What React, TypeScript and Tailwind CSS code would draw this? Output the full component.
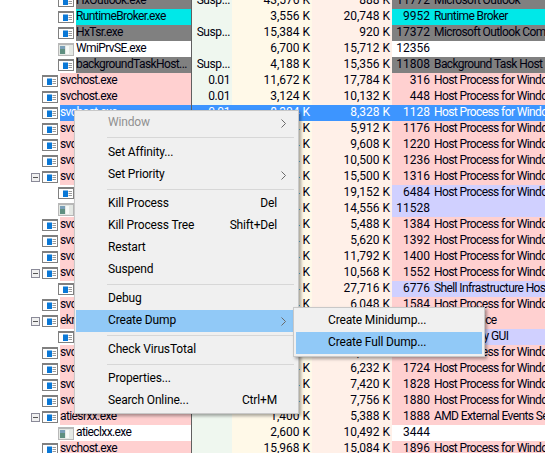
const FONT = "font-['Roboto',sans-serif]";

type Row = {
  depth: number;
  exp?: boolean;
  icon?: "app" | "img";
  name: string;
  bg: string;
  cpu?: string;
  priv: string;
  ws: string;
  pid: string;
  desc: string;
};

const PINK = "bg-[#ffd0d0]";
const GRAY = "bg-[#808080]";
const LAV = "bg-[#d0d0ff]";
const CYAN = "bg-[#00e8e8]";
const WHITE = "bg-white";
const HOST = "Host Process for Windows Services";

const rows: Row[] = [
  { depth: 2, name: "HxOutlook.exe", bg: GRAY, cpu: "Susp...", priv: "43,576 K", ws: "888 K", pid: "11772", desc: "Microsoft Outlook" },
  { depth: 2, name: "RuntimeBroker.exe", bg: CYAN, priv: "3,556 K", ws: "20,748 K", pid: "9952", desc: "Runtime Broker" },
  { depth: 2, name: "HxTsr.exe", bg: GRAY, cpu: "Susp...", priv: "15,384 K", ws: "920 K", pid: "17372", desc: "Microsoft Outlook Communications" },
  { depth: 2, icon: "img", name: "WmiPrvSE.exe", bg: WHITE, priv: "6,700 K", ws: "15,712 K", pid: "12356", desc: "" },
  { depth: 2, name: "backgroundTaskHost...", bg: GRAY, cpu: "Susp...", priv: "4,188 K", ws: "15,356 K", pid: "11808", desc: "Background Task Host" },
  { depth: 1, name: "svchost.exe", bg: PINK, cpu: "0.01", priv: "11,672 K", ws: "17,784 K", pid: "316", desc: HOST },
  { depth: 1, name: "svchost.exe", bg: PINK, cpu: "0.01", priv: "3,124 K", ws: "10,132 K", pid: "448", desc: HOST },
  { depth: 1, name: "svchost.exe", bg: "sel", cpu: "0.01", priv: "8,304 K", ws: "8,328 K", pid: "1128", desc: HOST },
  { depth: 1, name: "svchost.exe", bg: PINK, priv: "2,304 K", ws: "5,912 K", pid: "1176", desc: HOST },
  { depth: 1, name: "svchost.exe", bg: PINK, priv: "3,304 K", ws: "9,608 K", pid: "1220", desc: HOST },
  { depth: 1, name: "svchost.exe", bg: PINK, priv: "4,304 K", ws: "10,500 K", pid: "1236", desc: HOST },
  { depth: 1, exp: true, name: "svchost.exe", bg: PINK, priv: "5,304 K", ws: "15,500 K", pid: "1316", desc: HOST },
  { depth: 2, name: "sihost.exe", bg: LAV, priv: "4,304 K", ws: "19,152 K", pid: "6484", desc: HOST },
  { depth: 2, icon: "img", name: "WmiPrvSE.exe", bg: LAV, priv: "4,304 K", ws: "14,556 K", pid: "11528", desc: "" },
  { depth: 1, name: "svchost.exe", bg: PINK, priv: "1,304 K", ws: "5,488 K", pid: "1384", desc: HOST },
  { depth: 1, name: "svchost.exe", bg: PINK, priv: "1,304 K", ws: "5,620 K", pid: "1392", desc: HOST },
  { depth: 1, name: "svchost.exe", bg: PINK, priv: "2,304 K", ws: "11,792 K", pid: "1400", desc: HOST },
  { depth: 1, exp: true, name: "svchost.exe", bg: PINK, priv: "2,304 K", ws: "10,568 K", pid: "1552", desc: HOST },
  { depth: 2, name: "sihost.exe", bg: LAV, priv: "4,304 K", ws: "27,716 K", pid: "6776", desc: "Shell Infrastructure Host" },
  { depth: 1, name: "svchost.exe", bg: PINK, priv: "2,304 K", ws: "6,048 K", pid: "1584", desc: HOST },
  { depth: 1, exp: true, name: "ekrn.exe", bg: PINK, priv: "2,304 K", ws: "6,048 K", pid: "1600", desc: "ESET Service" },
  { depth: 2, name: "egui.exe", bg: LAV, priv: "2,304 K", ws: "6,048 K", pid: "1620", desc: "ESET Proxy GUI" },
  { depth: 1, name: "svchost.exe", bg: PINK, priv: "2,304 K", ws: "6,048 K", pid: "1640", desc: HOST },
  { depth: 1, name: "svchost.exe", bg: PINK, priv: "2,304 K", ws: "6,232 K", pid: "1724", desc: HOST },
  { depth: 1, name: "svchost.exe", bg: PINK, priv: "2,304 K", ws: "7,420 K", pid: "1828", desc: HOST },
  { depth: 1, name: "svchost.exe", bg: PINK, priv: "2,304 K", ws: "7,756 K", pid: "1880", desc: HOST },
  { depth: 1, exp: true, name: "atiesrxx.exe", bg: PINK, priv: "1,400 K", ws: "5,388 K", pid: "1888", desc: "AMD External Events Service" },
  { depth: 2, icon: "img", name: "atieclxx.exe", bg: WHITE, priv: "2,600 K", ws: "10,492 K", pid: "3444", desc: "" },
  { depth: 1, name: "svchost.exe", bg: PINK, priv: "15,968 K", ws: "15,084 K", pid: "1896", desc: HOST },
];

function AppIcon() {
  return (
    <svg width="16" height="12" viewBox="0 0 16 12" className="shrink-0">
      <rect x="0" y="0" width="16" height="12" fill="#808080" />
      <rect x="1" y="2" width="14" height="9" fill="#fff" />
      <rect x="5" y="3.5" width="5" height="6.5" fill="#0a78d7" />
      <path d="M10.5 4.5h3.5M10.5 6.5h3.5M10.5 8.5h3.5" stroke="#9a9a9a" />
    </svg>
  );
}

function ImgIcon() {
  return (
    <svg width="16" height="13" viewBox="0 0 16 13" className="shrink-0">
      <rect x="0" y="0" width="16" height="13" fill="#b8b8b8" />
      <rect x="1" y="2" width="14" height="10" fill="#e4e8e4" />
      <rect x="2" y="3" width="5" height="8" fill="#5f8f80" />
      <rect x="2" y="3" width="5" height="3" fill="#7a9fb8" />
      <rect x="8" y="3" width="3" height="8" fill="#f8faf8" />
    </svg>
  );
}

function Expander() {
  return (
    <div className="w-[9px] h-[9px] border border-[#8a8a98] bg-[#f0f0f0] flex items-center justify-center shrink-0">
      <div className="w-[5px] h-px bg-[#555]" />
    </div>
  );
}

function ProcessRow({ r }: { r: Row }) {
  const sel = r.bg === "sel";
  const indent = r.depth === 2 ? "pl-[58px]" : "pl-[42px]";
  const numText = sel ? "text-white" : "text-[#000010]";
  const selBg = "bg-[#3d95ff]";
  return (
    <div className={`flex h-4 leading-[15px] text-xs whitespace-nowrap ${numText}`}>
      <div className={`relative w-[192px] shrink-0 flex border-r border-[#606060] ${indent}`}>
        {r.exp && (
          <div className="absolute left-[31px] top-[4px]">
            <Expander />
          </div>
        )}
        <div className="w-[18px] shrink-0 pt-[2px]">
          {r.icon === "img" ? <ImgIcon /> : <AppIcon />}
        </div>
        <div className={`flex-1 min-w-0 overflow-hidden tracking-[-0.6px] ${sel ? selBg : r.bg}`}>{r.name}</div>
      </div>
      <div className={`w-10 shrink-0 text-right pr-[2px] tracking-[-0.4px] ${sel ? selBg : "bg-[#eff7ef]"}`}>{r.cpu}</div>
      <div className={`w-20 shrink-0 text-right pr-[2px] ${sel ? selBg : "bg-[#fff9e8]"}`}>{r.priv}</div>
      <div className={`w-20 shrink-0 text-right pr-[2px] ${sel ? selBg : "bg-[#fff0e8]"}`}>{r.ws}</div>
      <div className={`flex flex-1 min-w-0 overflow-hidden ${sel ? selBg : r.bg}`}>
        <div className="w-[38px] shrink-0 text-right">{r.pid}</div>
        <div className="pl-[4px] tracking-[-0.6px]">{r.desc}</div>
      </div>
    </div>
  );
}

function Chevron() {
  return (
    <svg width="5" height="9" viewBox="0 0 5 9" className="absolute right-[11px] top-[7px]">
      <path d="M0.5 0.5 L4.5 4.5 L0.5 8.5" fill="none" stroke="#6a6a6a" />
    </svg>
  );
}

function MenuItem({ label, shortcut, arrow, disabled, active }: { label: string; shortcut?: string; arrow?: boolean; disabled?: boolean; active?: boolean }) {
  return (
    <div className={`relative h-[22px] leading-[21px] flex justify-between pr-[20px] pl-[32px] tracking-[-0.15px] ${active ? "bg-[#91c9f7]" : ""} ${disabled ? "text-[#909090]" : "text-[#000000]"}`}>
      <span>{label}</span>
      {shortcut && <span>{shortcut}</span>}
      {arrow && <Chevron />}
    </div>
  );
}

function Sep({ first }: { first?: boolean }) {
  return <div className={`ml-[31px] mr-[3px] h-px bg-[#d7d7d7] ${first ? "mt-[3px] mb-[4px]" : "my-[3px]"}`} />;
}

export default function App() {
  return (
    <div className={`relative w-[545px] h-[453px] overflow-hidden bg-white ${FONT}`}>
      <div className="-mt-[7px]">
        {rows.map((r, i) => (
          <ProcessRow key={i} r={r} />
        ))}
      </div>

      <div className="absolute left-[74px] top-[110px] w-[225px] bg-[#f0f0f0] border border-[#c8c8c8] shadow-[2px_2px_3px_rgba(0,0,0,0.35)] text-xs p-[1px]">
        <MenuItem label="Window" arrow disabled />
        <Sep first />
        <MenuItem label="Set Affinity..." />
        <MenuItem label="Set Priority" arrow />
        <Sep />
        <MenuItem label="Kill Process" shortcut="Del" />
        <MenuItem label="Kill Process Tree" shortcut="Shift+Del" />
        <MenuItem label="Restart" />
        <MenuItem label="Suspend" />
        <Sep />
        <MenuItem label="Debug" />
        <MenuItem label="Create Dump" arrow active />
        <Sep />
        <MenuItem label="Check VirusTotal" />
        <Sep />
        <MenuItem label="Properties..." />
        <MenuItem label="Search Online..." shortcut="Ctrl+M" />
      </div>

      <div className="absolute left-[293px] top-[307px] w-[192px] bg-[#f0f0f0] border border-[#c8c8c8] shadow-[2px_2px_3px_rgba(0,0,0,0.35)] text-xs p-[2px]">
        <MenuItem label="Create Minidump..." />
        <MenuItem label="Create Full Dump..." active />
      </div>
    </div>
  );
}
